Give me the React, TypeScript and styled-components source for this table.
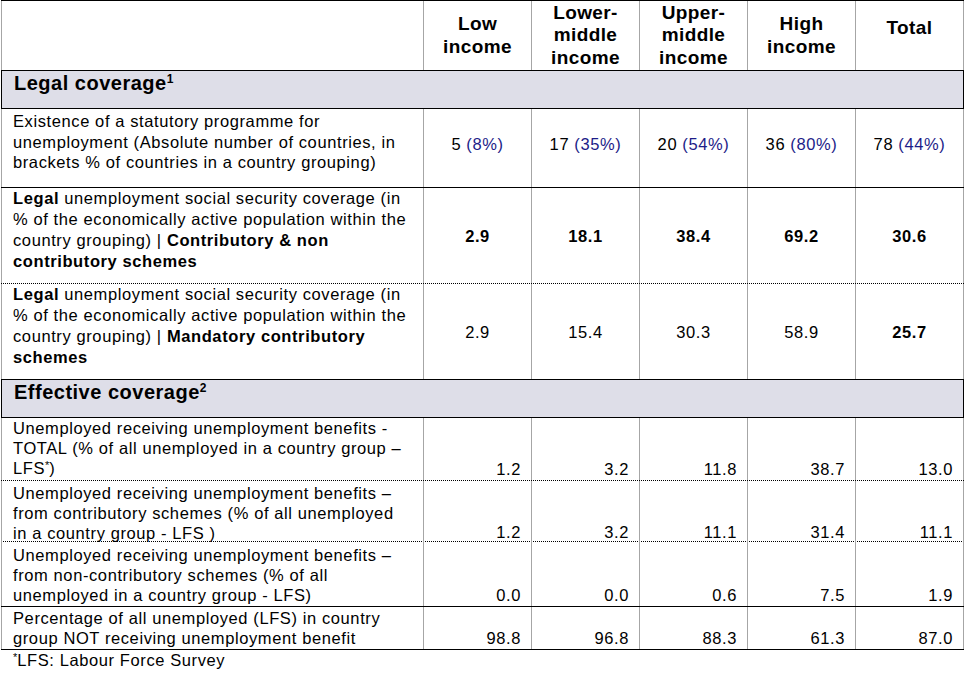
import React from 'react';
import styled, { createGlobalStyle } from 'styled-components';

const Global = createGlobalStyle`
  html, body { margin: 0; padding: 0; background: #ffffff; }
  body { font-family: "Liberation Sans", Arial, sans-serif; color: #000000; }
`;

const Page = styled.div`
  width: 963px;
  margin-left: 1px;
`;

const Table = styled.div`
  display: flex;
  flex-direction: column;
  border-top: 1px solid #000000;
`;

type Line = 'solid' | 'dotted' | 'none';

const Row = styled.div<{ $h: number; $line: Line }>`
  display: grid;
  grid-template-columns: 423px repeat(5, 108px);
  height: ${(p) => p.$h}px;
  box-sizing: border-box;
  border-bottom: ${(p) => (p.$line === 'none' ? '0' : `1px ${p.$line} #000000`)};
`;

const Cell = styled.div`
  box-sizing: border-box;
  border-right: 1px solid #a6a6a6;
  &:first-child {
    border-left: 1px solid #a6a6a6;
  }
`;

const HeadCell = styled(Cell)<{ $pb?: number }>`
  display: flex;
  align-items: center;
  justify-content: center;
  text-align: center;
  font-weight: bold;
  font-size: 19px;
  line-height: 22.5px;
  letter-spacing: 0.4px;
  padding-bottom: ${(p) => p.$pb ?? 0}px;
`;

const LabelCell = styled(Cell)<{ $pt: number; $lh: number }>`
  padding: ${(p) => p.$pt}px 2px 0 11px;
  font-size: 16.5px;
  line-height: ${(p) => p.$lh}px;
  letter-spacing: 0.6px;
  white-space: nowrap;
  b {
    font-weight: bold;
  }
`;

const ValueCell = styled(Cell)<{ $mode: 'center' | 'end'; $pt?: number; $pb?: number; $bold?: boolean }>`
  display: flex;
  align-items: ${(p) => (p.$mode === 'center' ? 'center' : 'flex-end')};
  justify-content: ${(p) => (p.$mode === 'center' ? 'center' : 'flex-end')};
  padding: ${(p) => p.$pt ?? 0}px ${(p) => (p.$mode === 'center' ? 0 : 10)}px
    ${(p) => p.$pb ?? (p.$mode === 'center' ? 0 : 3)}px 0;
  font-size: 16.5px;
  line-height: 16px;
  letter-spacing: 0.6px;
  font-weight: ${(p) => (p.$bold ? 'bold' : 'normal')};
  white-space: nowrap;
`;

const Pct = styled.span`
  color: #1c1c88;
`;

const Band = styled.div`
  height: 39px;
  box-sizing: border-box;
  border: 1px solid #000000;
  background: #dedee8;
  padding-left: 12px;
  font-weight: bold;
  font-size: 20px;
  line-height: 24px;
  letter-spacing: 0.5px;
`;

const Sup = styled.sup`
  font-size: 12px;
  line-height: 0;
  vertical-align: 7px;
  letter-spacing: 0;
`;

const Star = styled.sup`
  font-size: 11px;
  line-height: 0;
  vertical-align: 5px;
  letter-spacing: 0;
`;

const Footer = styled.div`
  padding-left: 12px;
  font-size: 16.5px;
  line-height: 20px;
  letter-spacing: 0.6px;
`;

const heads: { lines: string[]; pb?: number }[] = [
  { lines: ['Low', 'income'] },
  { lines: ['Lower-', 'middle', 'income'] },
  { lines: ['Upper-', 'middle', 'income'] },
  { lines: ['High', 'income'] },
  { lines: ['Total'], pb: 14 },
];

const statutory: [string, string][] = [
  ['5', '(8%)'],
  ['17', '(35%)'],
  ['20', '(54%)'],
  ['36', '(80%)'],
  ['78', '(44%)'],
];

type EffRow = {
  h: number;
  line: Line;
  pt: number;
  label: React.ReactNode;
  values: string[];
};

const effective: EffRow[] = [
  {
    h: 63,
    line: 'dotted',
    pt: 0,
    label: (
      <>
        Unemployed receiving unemployment benefits -<br />
        TOTAL (% of all unemployed in a country group –<br />
        LFS<Star>*</Star>)
      </>
    ),
    values: ['1.2', '3.2', '11.8', '38.7', '13.0'],
  },
  {
    h: 61,
    line: 'dotted',
    pt: 2,
    label: (
      <>
        Unemployed receiving unemployment benefits –<br />
        from contributory schemes (% of all unemployed<br />
        in a country group - LFS )
      </>
    ),
    values: ['1.2', '3.2', '11.1', '31.4', '11.1'],
  },
  {
    h: 65,
    line: 'solid',
    pt: 3,
    label: (
      <>
        Unemployed receiving unemployment benefits –<br />
        from non-contributory schemes (% of all<br />
        unemployed in a country group - LFS)
      </>
    ),
    values: ['0.0', '0.0', '0.6', '7.5', '1.9'],
  },
  {
    h: 43,
    line: 'solid',
    pt: 1,
    label: (
      <>
        Percentage of all unemployed (LFS) in country<br />
        group NOT receiving unemployment benefit
      </>
    ),
    values: ['98.8', '96.8', '88.3', '61.3', '87.0'],
  },
];

export default function App() {
  return (
    <Page>
      <Global />
      <Table>
        <Row $h={69} $line="none">
          <Cell />
          {heads.map((h, i) => (
            <HeadCell key={i} $pb={h.pb}>
              <div>
                {h.lines.map((l, j) => (
                  <div key={j}>{l}</div>
                ))}
              </div>
            </HeadCell>
          ))}
        </Row>

        <Band>
          Legal coverage<Sup>1</Sup>
        </Band>

        <Row $h={79} $line="solid">
          <LabelCell $pt={2} $lh={20.5}>
            Existence of a statutory programme for
            <br />
            unemployment (Absolute number of countries, in
            <br />
            brackets % of countries in a country grouping)
          </LabelCell>
          {statutory.map(([n, p], i) => (
            <ValueCell key={i} $mode="center" $pt={2} $pb={11}>
              {n}&nbsp;<Pct>{p}</Pct>
            </ValueCell>
          ))}
        </Row>

        <Row $h={96} $line="dotted">
          <LabelCell $pt={0} $lh={21}>
            <b>Legal</b> unemployment social security coverage (in
            <br />
            % of the economically active population within the
            <br />
            country grouping) | <b>Contributory &amp; non</b>
            <br />
            <b>contributory schemes</b>
          </LabelCell>
          {['2.9', '18.1', '38.4', '69.2', '30.6'].map((v, i) => (
            <ValueCell key={i} $mode="center" $bold>
              {v}
            </ValueCell>
          ))}
        </Row>

        <Row $h={95} $line="none">
          <LabelCell $pt={0} $lh={21}>
            <b>Legal</b> unemployment social security coverage (in
            <br />
            % of the economically active population within the
            <br />
            country grouping) | <b>Mandatory contributory</b>
            <br />
            <b>schemes</b>
          </LabelCell>
          {['2.9', '15.4', '30.3', '58.9', '25.7'].map((v, i) => (
            <ValueCell key={i} $mode="center" $bold={i === 4}>
              {v}
            </ValueCell>
          ))}
        </Row>

        <Band>
          Effective coverage<Sup>2</Sup>
        </Band>

        {effective.map((r, i) => (
          <Row key={i} $h={r.h} $line={r.line}>
            <LabelCell $pt={r.pt} $lh={20}>
              {r.label}
            </LabelCell>
            {r.values.map((v, j) => (
              <ValueCell key={j} $mode="end">
                {v}
              </ValueCell>
            ))}
          </Row>
        ))}
      </Table>
      <Footer>
        <Star>*</Star>LFS: Labour Force Survey
      </Footer>
    </Page>
  );
}
